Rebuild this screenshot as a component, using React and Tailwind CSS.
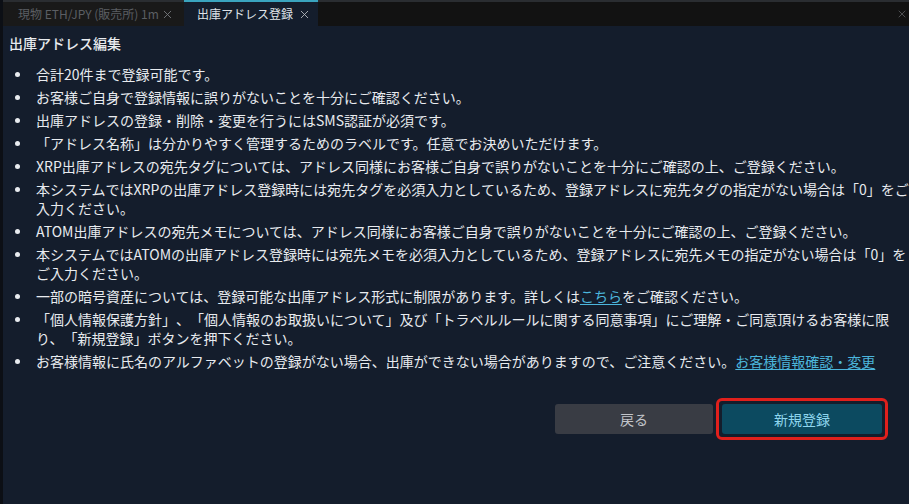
import { X } from "lucide-react";

const items = [
  ["合計20件まで登録可能です。"],
  ["お客様ご自身で登録情報に誤りがないことを十分にご確認ください。"],
  ["出庫アドレスの登録・削除・変更を行うにはSMS認証が必須です。"],
  ["「アドレス名称」は分かりやすく管理するためのラベルです。任意でお決めいただけます。"],
  ["XRP出庫アドレスの宛先タグについては、アドレス同様にお客様ご自身で誤りがないことを十分にご確認の上、ご登録ください。"],
  [
    "本システムではXRPの出庫アドレス登録時には宛先タグを必須入力としているため、登録アドレスに宛先タグの指定がない場合は「0」をご",
    "入力ください。",
  ],
  ["ATOM出庫アドレスの宛先メモについては、アドレス同様にお客様ご自身で誤りがないことを十分にご確認の上、ご登録ください。"],
  [
    "本システムではATOMの出庫アドレス登録時には宛先メモを必須入力としているため、登録アドレスに宛先メモの指定がない場合は「0」を",
    "ご入力ください。",
  ],
];

const Bullet = ({ children }) => (
  <li className="flex">
    <span className="w-[24px] shrink-0 pt-[7px]">
      <span className="block w-[5px] h-[5px] ml-[3px] rounded-full bg-[#e8ebef]" />
    </span>
    <div className="min-w-0">{children}</div>
  </li>
);

export default function App() {
  return (
    <div
      className="w-[909px] h-[504px] flex flex-col bg-[#141d2c] text-[#e8ebef] overflow-hidden border-l-[3px] border-[#0c0f15] [text-spacing-trim:space-all]"
      style={{ fontFamily: '"Noto Sans CJK JP", "Noto Sans", sans-serif' }}
    >
      <div className="h-[26px] shrink-0 flex items-stretch bg-[#121212] border-t-[2px] border-[#2a2d31]">
        <div className="w-[181px] flex items-center pl-[15px] pr-[10px] bg-[#191919] text-[12px] text-[#5b5e63]">
          <span className="whitespace-nowrap">現物 ETH/JPY (販売所) 1m</span>
          <X size={13} strokeWidth={1.6} className="ml-auto text-[#7a7d82]" />
        </div>
        <div className="w-[134px] -mt-[2px] flex items-center pl-[13px] pr-[7px] bg-[#141d2c] border-t-[2px] border-[#3aa4bf] text-[12px] text-[#dfe3e8]">
          <span className="whitespace-nowrap">出庫アドレス登録</span>
          <X size={13} strokeWidth={1.6} className="ml-auto text-[#b9bdc3]" />
        </div>
        <div className="flex-1 flex items-center justify-end pr-[1px]">
          <X size={12} strokeWidth={1} className="text-[#8a8d92]" />
        </div>
      </div>

      <div className="flex-1 pl-[6px] pt-[7px]">
        <h2 className="text-[14px] leading-[20px] font-medium">出庫アドレス編集</h2>
        <ul className="mt-[12px] pl-[3px] text-[14px] leading-[19px] flex flex-col gap-[4px]">
          {items.map((lines, i) => (
            <Bullet key={i}>
              {lines.map((l, j) => (
                <div key={j} className="whitespace-nowrap">
                  {l}
                </div>
              ))}
            </Bullet>
          ))}
          <Bullet>
            <div className="whitespace-nowrap">
              一部の暗号資産については、登録可能な出庫アドレス形式に制限があります。詳しくは
              <a className="text-[#4cb6dc] underline underline-offset-2">こちら</a>
              をご確認ください。
            </div>
          </Bullet>
          <Bullet>
            <div className="whitespace-nowrap">
              「個人情報保護方針」、「個人情報のお取扱いについて」及び「トラベルルールに関する同意事項」にご理解・ご同意頂けるお客様に限
            </div>
            <div className="whitespace-nowrap">り、「新規登録」ボタンを押下ください。</div>
          </Bullet>
          <Bullet>
            <div className="whitespace-nowrap">
              お客様情報に氏名のアルファベットの登録がない場合、出庫ができない場合がありますので、ご注意ください。
              <a className="text-[#4cb6dc] underline underline-offset-2">お客様情報確認・変更</a>
            </div>
          </Bullet>
        </ul>

        <div className="mt-[33px] flex justify-end gap-[9px] pr-[27px]">
          <button className="w-[158px] h-[30px] rounded-[3px] bg-[#393c44] text-[14px] text-[#c2c5ca]">
            戻る
          </button>
          <div className="relative">
            <button className="w-[160px] h-[30px] rounded-[3px] bg-[#0c4a60] text-[14px] text-[#8fd6ee]">
              新規登録
            </button>
            <div className="absolute -inset-[6px] rounded-[6px] border-[3px] border-[#e0201c]" />
          </div>
        </div>
      </div>
    </div>
  );
}
